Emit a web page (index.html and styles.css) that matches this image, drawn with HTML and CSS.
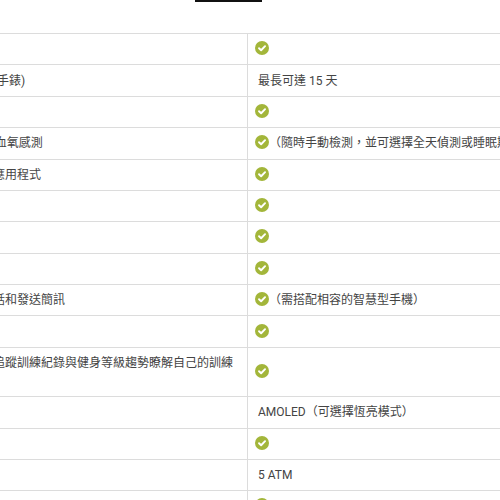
FILE: index.html
```html
<!DOCTYPE html>
<html lang="zh-Hant">
<head>
<meta charset="utf-8">
<title>規格比較</title>
<link rel="stylesheet" href="styles.css">
</head>
<body>
<div class="tabs">
  <div class="tab-active"></div>
</div>
<table class="spec">
  <colgroup><col class="c-label"><col class="c-value"></colgroup>
  <tbody>
    <tr><td>內建GPS</td><td><svg class="ok" viewBox="0 0 16 16"><circle cx="8" cy="8" r="8"/><path d="M4.6 8.3 7 10.6 11.5 5.9"/></svg></td></tr>
    <tr><td>續航(智慧手錶)</td><td>最長可達 15 天</td></tr>
    <tr><td>心率偵測</td><td><svg class="ok" viewBox="0 0 16 16"><circle cx="8" cy="8" r="8"/><path d="M4.6 8.3 7 10.6 11.5 5.9"/></svg></td></tr>
    <tr><td>Pulse Ox 血氧感測</td><td><svg class="ok" viewBox="0 0 16 16"><circle cx="8" cy="8" r="8"/><path d="M4.6 8.3 7 10.6 11.5 5.9"/></svg>（隨時手動檢測，並可選擇全天偵測或睡眠期間偵測）</td></tr>
    <tr><td>智慧手錶應用程式</td><td><svg class="ok" viewBox="0 0 16 16"><circle cx="8" cy="8" r="8"/><path d="M4.6 8.3 7 10.6 11.5 5.9"/></svg></td></tr>
    <tr><td>睡眠監測</td><td><svg class="ok" viewBox="0 0 16 16"><circle cx="8" cy="8" r="8"/><path d="M4.6 8.3 7 10.6 11.5 5.9"/></svg></td></tr>
    <tr><td>壓力指數</td><td><svg class="ok" viewBox="0 0 16 16"><circle cx="8" cy="8" r="8"/><path d="M4.6 8.3 7 10.6 11.5 5.9"/></svg></td></tr>
    <tr><td>身體能量</td><td><svg class="ok" viewBox="0 0 16 16"><circle cx="8" cy="8" r="8"/><path d="M4.6 8.3 7 10.6 11.5 5.9"/></svg></td></tr>
    <tr><td>可接聽電話和發送簡訊</td><td><svg class="ok" viewBox="0 0 16 16"><circle cx="8" cy="8" r="8"/><path d="M4.6 8.3 7 10.6 11.5 5.9"/></svg>（需搭配相容的智慧型手機）</td></tr>
    <tr><td>恢復時間</td><td><svg class="ok" viewBox="0 0 16 16"><circle cx="8" cy="8" r="8"/><path d="M4.6 8.3 7 10.6 11.5 5.9"/></svg></td></tr>
    <tr><td>讓您透過追蹤訓練紀錄與健身等級趨勢瞭解自己的訓練成效</td><td><svg class="ok" viewBox="0 0 16 16"><circle cx="8" cy="8" r="8"/><path d="M4.6 8.3 7 10.6 11.5 5.9"/></svg></td></tr>
    <tr><td>顯示器</td><td>AMOLED（可選擇恆亮模式）</td></tr>
    <tr><td>觸控螢幕</td><td><svg class="ok" viewBox="0 0 16 16"><circle cx="8" cy="8" r="8"/><path d="M4.6 8.3 7 10.6 11.5 5.9"/></svg></td></tr>
    <tr><td>防水等級</td><td>5 ATM</td></tr>
    <tr><td>音樂儲存</td><td><svg class="ok" viewBox="0 0 16 16"><circle cx="8" cy="8" r="8"/><path d="M4.6 8.3 7 10.6 11.5 5.9"/></svg></td></tr>
    <tr><td>Garmin Pay</td><td><svg class="ok" viewBox="0 0 16 16"><circle cx="8" cy="8" r="8"/><path d="M4.6 8.3 7 10.6 11.5 5.9"/></svg></td></tr>
  </tbody>
</table>
</body>
</html>
```

FILE: styles.css
```css
html, body {
  overflow: hidden;
}
body {
  margin: 0;
  background: #fff;
  font-family: Roboto, "Noto Sans CJK TC", sans-serif;
  font-size: 12px;
  color: #444;
}
.tabs {
  height: 33px;
}
.tab-active {
  margin-left: 195px;
  width: 67px;
  height: 2px;
  background: #111;
}
.spec {
  margin-left: -66px;
  border-collapse: collapse;
  table-layout: fixed;
  width: 733px;
}
.c-label { width: 313px; }
.c-value { width: 420px; }
.spec td {
  border: 1px solid #dcdcdc;
  padding: 6.2px 10px;
  line-height: 18px;
  vertical-align: middle;
  text-align: left;
}
.ok {
  display: inline-block;
  width: 14px;
  height: 14px;
  margin-left: -3px;
  vertical-align: -2px;
}
.ok circle { fill: #a3b63a; }
.ok path {
  fill: none;
  stroke: #fff;
  stroke-width: 2.2;
  stroke-linecap: round;
  stroke-linejoin: round;
}
```
